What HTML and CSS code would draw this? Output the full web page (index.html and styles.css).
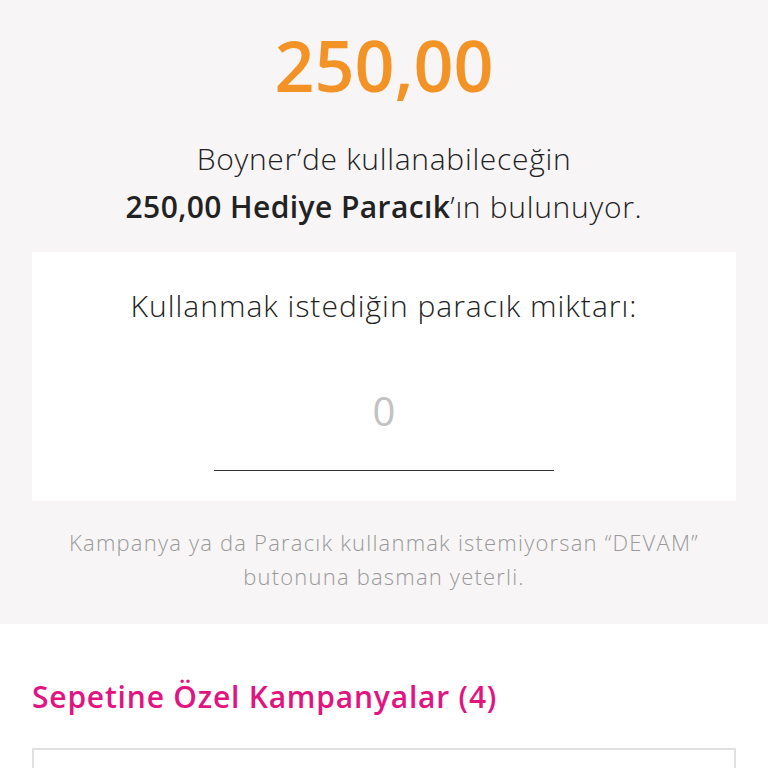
FILE: index.html
```html
<!DOCTYPE html>
<html lang="tr">
<head>
    <meta charset="UTF-8">
    <title>Paracık</title>
    <link rel="stylesheet" href="styles.css">
</head>
<body>

    <!-- Paracık bakiyesi -->
    <section class="balance">
        <div class="amount">250,00</div>
        <p class="info">
            Boyner’de kullanabileceğin<br>
            <strong>250,00 Hediye Paracık</strong>’ın bulunuyor.
        </p>

        <div class="card">
            <label for="useAmount">Kullanmak istediğin paracık miktarı:</label>
            <input type="text" id="useAmount" placeholder="0">
        </div>

        <p class="note">Kampanya ya da Paracık kullanmak istemiyorsan “DEVAM”<br>butonuna basman yeterli.</p>
    </section>

    <!-- Kampanyalar -->
    <section class="campaigns">
        <h2>Sepetine Özel Kampanyalar (4)</h2>
        <div class="campaign-box"></div>
    </section>

</body>
</html>
```

FILE: styles.css
```css
body {
    margin: 0;
    font-family: "Open Sans", Lato, sans-serif;
    color: #222;
    background-color: #fff;
}

.balance {
    background-color: #f7f5f6;
    padding: 25px 32px 31px;
    text-align: center;
}

.amount {
    color: #f39326;
    font-size: 70px;
    font-weight: 600;
    line-height: 80px;
}

.info {
    margin: 30px 0 0;
    font-size: 30px;
    line-height: 48px;
    font-weight: 300;
    letter-spacing: 0.7px;
}

.info strong {
    font-weight: 600;
    letter-spacing: 0.4px;
}

.card {
    background-color: #fff;
    margin-top: 21px;
    padding: 30px 0 30px;
    display: flex;
    flex-direction: column;
    align-items: center;
}

.card label {
    font-size: 30px;
    font-weight: 300;
    line-height: 48px;
    letter-spacing: 1px;
}

.card input {
    margin-top: 56px;
    width: 340px;
    border: none;
    border-bottom: 1px solid #333;
    background: transparent;
    text-align: center;
    font-family: inherit;
    font-size: 40px;
    line-height: 50px;
    padding: 0 0 34px;
    outline: none;
}

.card input::placeholder {
    color: #c2c2c2;
}

.note {
    margin: 24px 0 0;
    font-size: 22px;
    line-height: 34px;
    font-weight: 300;
    color: #999;
    letter-spacing: 1.2px;
}

.campaigns {
    padding: 50px 32px 0;
}

.campaigns h2 {
    margin: 0;
    color: #e2147f;
    font-size: 30px;
    font-weight: 600;
    line-height: 46px;
    letter-spacing: 0.8px;
}

.campaign-box {
    margin-top: 28px;
    height: 60px;
    border: 2px solid #e0e0e0;
}
```
